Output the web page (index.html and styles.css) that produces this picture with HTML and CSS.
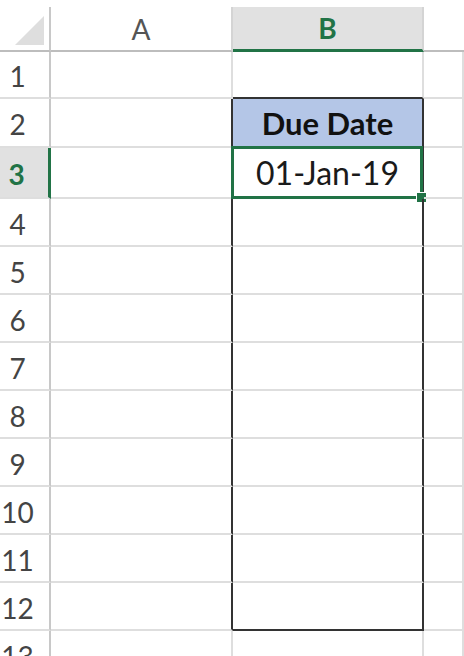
FILE: index.html
```html
<!DOCTYPE html>
<html lang="en">
<head>
    <meta charset="UTF-8">
    <meta name="viewport" content="width=device-width, initial-scale=1.0">
    <title>Due Date Sheet</title>
    <link rel="stylesheet" href="styles.css">
</head>
<body>
    <div class="sheet">
        <div class="row head-row">
            <div class="hcell corner"><div class="corner-tri"></div></div>
            <div class="hcell col-head">A</div>
            <div class="hcell col-head active">B</div>
            <div class="hcell col-head rest"></div>
        </div>
        <div class="row r1">
            <div class="num">1</div>
            <div class="cell"></div>
            <div class="cell box-top"></div>
            <div class="cell"></div>
        </div>
        <div class="row r2">
            <div class="num">2</div>
            <div class="cell box-left"></div>
            <div class="cell title">Due Date</div>
            <div class="cell"></div>
        </div>
        <div class="row r3">
            <div class="num active">3</div>
            <div class="cell box-left"></div>
            <div class="cell box-right selected">01-Jan-19
                <div class="selection"><span class="handle"></span></div>
            </div>
            <div class="cell"></div>
        </div>
        <div class="row">
            <div class="num">4</div>
            <div class="cell box-left"></div>
            <div class="cell box-right"></div>
            <div class="cell"></div>
        </div>
        <div class="row">
            <div class="num">5</div>
            <div class="cell box-left"></div>
            <div class="cell box-right"></div>
            <div class="cell"></div>
        </div>
        <div class="row">
            <div class="num">6</div>
            <div class="cell box-left"></div>
            <div class="cell box-right"></div>
            <div class="cell"></div>
        </div>
        <div class="row">
            <div class="num">7</div>
            <div class="cell box-left"></div>
            <div class="cell box-right"></div>
            <div class="cell"></div>
        </div>
        <div class="row">
            <div class="num">8</div>
            <div class="cell box-left"></div>
            <div class="cell box-right"></div>
            <div class="cell"></div>
        </div>
        <div class="row">
            <div class="num">9</div>
            <div class="cell box-left"></div>
            <div class="cell box-right"></div>
            <div class="cell"></div>
        </div>
        <div class="row">
            <div class="num">10</div>
            <div class="cell box-left"></div>
            <div class="cell box-right"></div>
            <div class="cell"></div>
        </div>
        <div class="row">
            <div class="num">11</div>
            <div class="cell box-left"></div>
            <div class="cell box-right"></div>
            <div class="cell"></div>
        </div>
        <div class="row">
            <div class="num">12</div>
            <div class="cell box-left"></div>
            <div class="cell box-right box-bottom"></div>
            <div class="cell"></div>
        </div>
        <div class="row r13">
            <div class="num">13</div>
            <div class="cell"></div>
            <div class="cell"></div>
            <div class="cell"></div>
        </div>
    </div>
</body>
</html>
```

FILE: styles.css
```css
body {
    margin: 0;
    background: #ffffff;
    font-family: Lato, "Liberation Sans", sans-serif;
    color: #222;
    overflow: hidden;
}
.sheet {
    width: 464px;
    height: 656px;
    overflow: hidden;
}
.row {
    display: grid;
    grid-template-columns: 51px 182px 191px 1fr;
    height: 48px;
}
.r1 {
    height: 47px;
}
.r2 {
    height: 49px;
}
.r3 {
    height: 51px;
}
.r13 {
    height: 48px;
}
.head-row {
    height: 52px;
    padding-top: 7px;
    box-sizing: border-box;
}
.hcell {
    box-sizing: border-box;
    border-right: 2px solid #d4d4d4;
    border-bottom: 2px solid #bdbdbd;
}
.corner {
    border-right-color: #c8c8c8;
}
.corner-tri {
    width: 29px;
    height: 29px;
    margin: 9px 0 0 15px;
    background: #dedede;
    clip-path: polygon(100% 0, 100% 100%, 0 100%);
}
.col-head {
    display: flex;
    align-items: center;
    justify-content: center;
    font-size: 28px;
    color: #555;
}
.col-head.active {
    background: #e1e1e1;
    color: #217346;
    font-weight: bold;
    border-bottom: 3px solid #217346;
}
.col-head.rest {
    border-right: none;
}
.num {
    display: flex;
    align-items: center;
    justify-content: center;
    padding-right: 14px;
    padding-top: 3px;
    font-size: 28px;
    color: #444;
    box-sizing: border-box;
    border-right: 2px solid #c8c8c8;
    border-bottom: 2px solid #dedede;
}
.num.active {
    background: #e1e1e1;
    color: #217346;
    font-weight: bold;
    border-right: 3px solid #217346;
    padding-right: 15px;
}
.cell {
    position: relative;
    box-sizing: border-box;
    border-right: 2px solid #dedede;
    border-bottom: 2px solid #dedede;
    display: flex;
    align-items: center;
    justify-content: center;
    font-size: 32px;
    color: #1a1a1a;
}
.box-top {
    border-bottom-color: #333;
}
.box-left {
    border-right-color: #333;
}
.box-right {
    border-right-color: #333;
}
.box-bottom {
    border-bottom-color: #333;
}
.title {
    background: #b4c6e7;
    font-weight: bold;
    font-size: 31px;
    color: #111;
    border-right-color: #333;
    border-bottom-color: #333;
}
.selection {
    position: absolute;
    top: -2px;
    left: -2px;
    right: -1px;
    bottom: -2px;
    border: 3px solid #217346;
    box-sizing: border-box;
}
.handle {
    position: absolute;
    right: -7px;
    bottom: -7px;
    width: 9px;
    height: 9px;
    background: #217346;
    border: 1px solid #fff;
}
```
